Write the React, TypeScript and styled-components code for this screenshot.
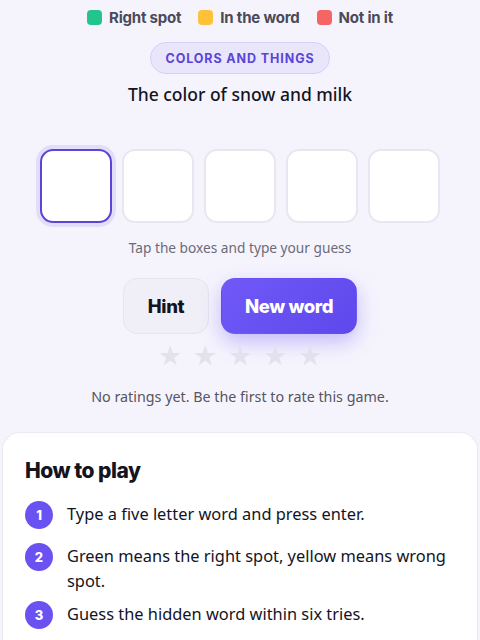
import { FC } from 'react';
import styled, { createGlobalStyle } from 'styled-components';

const Colors = {
    bg: '#f5f4fd',
    ink: '#14141f',
    grey: '#6b6b78',
    purple: '#6a52f2',
    purpleDark: '#5a45d6',
    green: '#22c58b',
    yellow: '#fdc23a',
    red: '#f56565',
    line: '#e8e6f0',
};

const heading = `Inter, "Liberation Sans", sans-serif`;
const body = `"Noto Sans", "Open Sans", sans-serif`;

const GlobalStyle = createGlobalStyle`
    * { box-sizing: border-box; }
    html, body {
        margin: 0;
        background: ${Colors.bg};
        font-family: ${body};
        color: ${Colors.ink};
    }
`;

const Page = styled.main`
    width: 480px;
    height: 640px;
    overflow: hidden;
    display: flex;
    flex-direction: column;
    align-items: center;
`;

const Legend = styled.ul`
    list-style: none;
    margin: 9px 0 0;
    padding: 0;
    display: flex;
    gap: 17px;
`;

const LegendItem = styled.li`
    display: flex;
    align-items: center;
    gap: 7px;
    font-family: ${heading};
    font-weight: 700;
    font-size: 15px;
    line-height: 17px;
    color: #4a4a58;
    letter-spacing: -0.2px;
`;

const Swatch = styled.span<{ $color: string }>`
    width: 15px;
    height: 15px;
    border-radius: 4px;
    background: ${p => p.$color};
`;

const Category = styled.div`
    margin-top: 16px;
    height: 32px;
    padding: 0 14px;
    display: flex;
    align-items: center;
    border-radius: 16px;
    background: #e9e6fb;
    border: 1px solid #d6d0f6;
    font-family: ${heading};
    font-weight: 700;
    font-size: 12.5px;
    letter-spacing: 0.9px;
    color: ${Colors.purpleDark};
`;

const Clue = styled.h1`
    margin: 8px 0 0;
    font-size: 17.5px;
    font-weight: 500;
    line-height: 24px;
`;

const Boxes = styled.div`
    margin-top: 43px;
    display: flex;
    gap: 10px;
`;

const LetterBox = styled.div<{ $active?: boolean }>`
    width: 72px;
    height: 74px;
    border-radius: 13px;
    background: #fff;
    border: 2px solid ${p => (p.$active ? Colors.purpleDark : Colors.line)};
    box-shadow: ${p => (p.$active ? '0 0 0 4px #e2ddfb' : 'none')};
`;

const Helper = styled.p`
    margin: 15px 0 0;
    font-size: 13.7px;
    line-height: 19px;
    color: ${Colors.grey};
`;

const Actions = styled.div`
    margin-top: 21px;
    display: flex;
    gap: 12px;
`;

const Button = styled.button<{ $primary?: boolean }>`
    height: 56px;
    padding: 0;
    width: ${p => (p.$primary ? '136px' : '86px')};
    border-radius: 14px;
    font-family: ${heading};
    font-weight: 800;
    font-size: 18.5px;
    letter-spacing: -0.4px;
    cursor: pointer;
    color: ${p => (p.$primary ? '#fff' : Colors.ink)};
    background: ${p => (p.$primary ? 'linear-gradient(135deg, #7059f7, #5f48ec)' : '#f0eff7')};
    border: 1px solid ${p => (p.$primary ? 'transparent' : '#e6e4ef')};
    box-shadow: ${p => (p.$primary ? '0 8px 20px rgba(106, 82, 242, 0.35)' : 'none')};
`;

const Stars = styled.div`
    margin-top: 6px;
    display: flex;
    gap: 11px;
    color: #e3e1ec;
    font-size: 27px;
    line-height: 30px;
`;

const RatingNote = styled.p`
    margin: 17px 0 0;
    font-size: 14.3px;
    line-height: 20px;
    color: #55555f;
`;

const Card = styled.section`
    margin-top: 25px;
    width: 476px;
    flex: 1;
    background: #fff;
    border: 1px solid #ebe9f2;
    border-bottom: none;
    border-radius: 18px 18px 0 0;
    padding: 25px 22px 0;
`;

const CardTitle = styled.h2`
    margin: 0;
    font-family: ${heading};
    font-weight: 800;
    font-size: 21px;
    line-height: 26px;
    letter-spacing: -0.5px;
`;

const Steps = styled.ol`
    list-style: none;
    margin: 17px 0 0;
    padding: 0;
    display: flex;
    flex-direction: column;
    gap: 8px;
`;

const Step = styled.li`
    display: flex;
    align-items: flex-start;
    gap: 14px;
    min-height: 34px;
    font-size: 16.4px;
    line-height: 25px;
`;

const StepNumber = styled.span`
    flex: none;
    width: 28px;
    height: 28px;
    border-radius: 50%;
    background: ${Colors.purple};
    color: #fff;
    display: flex;
    align-items: center;
    justify-content: center;
    font-family: ${heading};
    font-weight: 800;
    font-size: 13px;
`;

const legend = [
    { color: Colors.green, label: 'Right spot' },
    { color: Colors.yellow, label: 'In the word' },
    { color: Colors.red, label: 'Not in it' },
];

const steps = [
    'Type a five letter word and press enter.',
    'Green means the right spot, yellow means wrong spot.',
    'Guess the hidden word within six tries.',
];

const App: FC = () => {
    return (
        <>
            <GlobalStyle />
            <Page>
                <Legend>
                    {legend.map(item => (
                        <LegendItem key={item.label}>
                            <Swatch $color={item.color} />
                            {item.label}
                        </LegendItem>
                    ))}
                </Legend>
                <Category>COLORS AND THINGS</Category>
                <Clue>The color of snow and milk</Clue>
                <Boxes>
                    {[0, 1, 2, 3, 4].map(i => (
                        <LetterBox key={i} $active={i === 0} />
                    ))}
                </Boxes>
                <Helper>Tap the boxes and type your guess</Helper>
                <Actions>
                    <Button>Hint</Button>
                    <Button $primary>New word</Button>
                </Actions>
                <Stars>
                    {[0, 1, 2, 3, 4].map(i => (
                        <span key={i}>★</span>
                    ))}
                </Stars>
                <RatingNote>No ratings yet. Be the first to rate this game.</RatingNote>
                <Card>
                    <CardTitle>How to play</CardTitle>
                    <Steps>
                        {steps.map((text, i) => (
                            <Step key={i}>
                                <StepNumber>{i + 1}</StepNumber>
                                <span>{text}</span>
                            </Step>
                        ))}
                    </Steps>
                </Card>
            </Page>
        </>
    );
};

export default App;
